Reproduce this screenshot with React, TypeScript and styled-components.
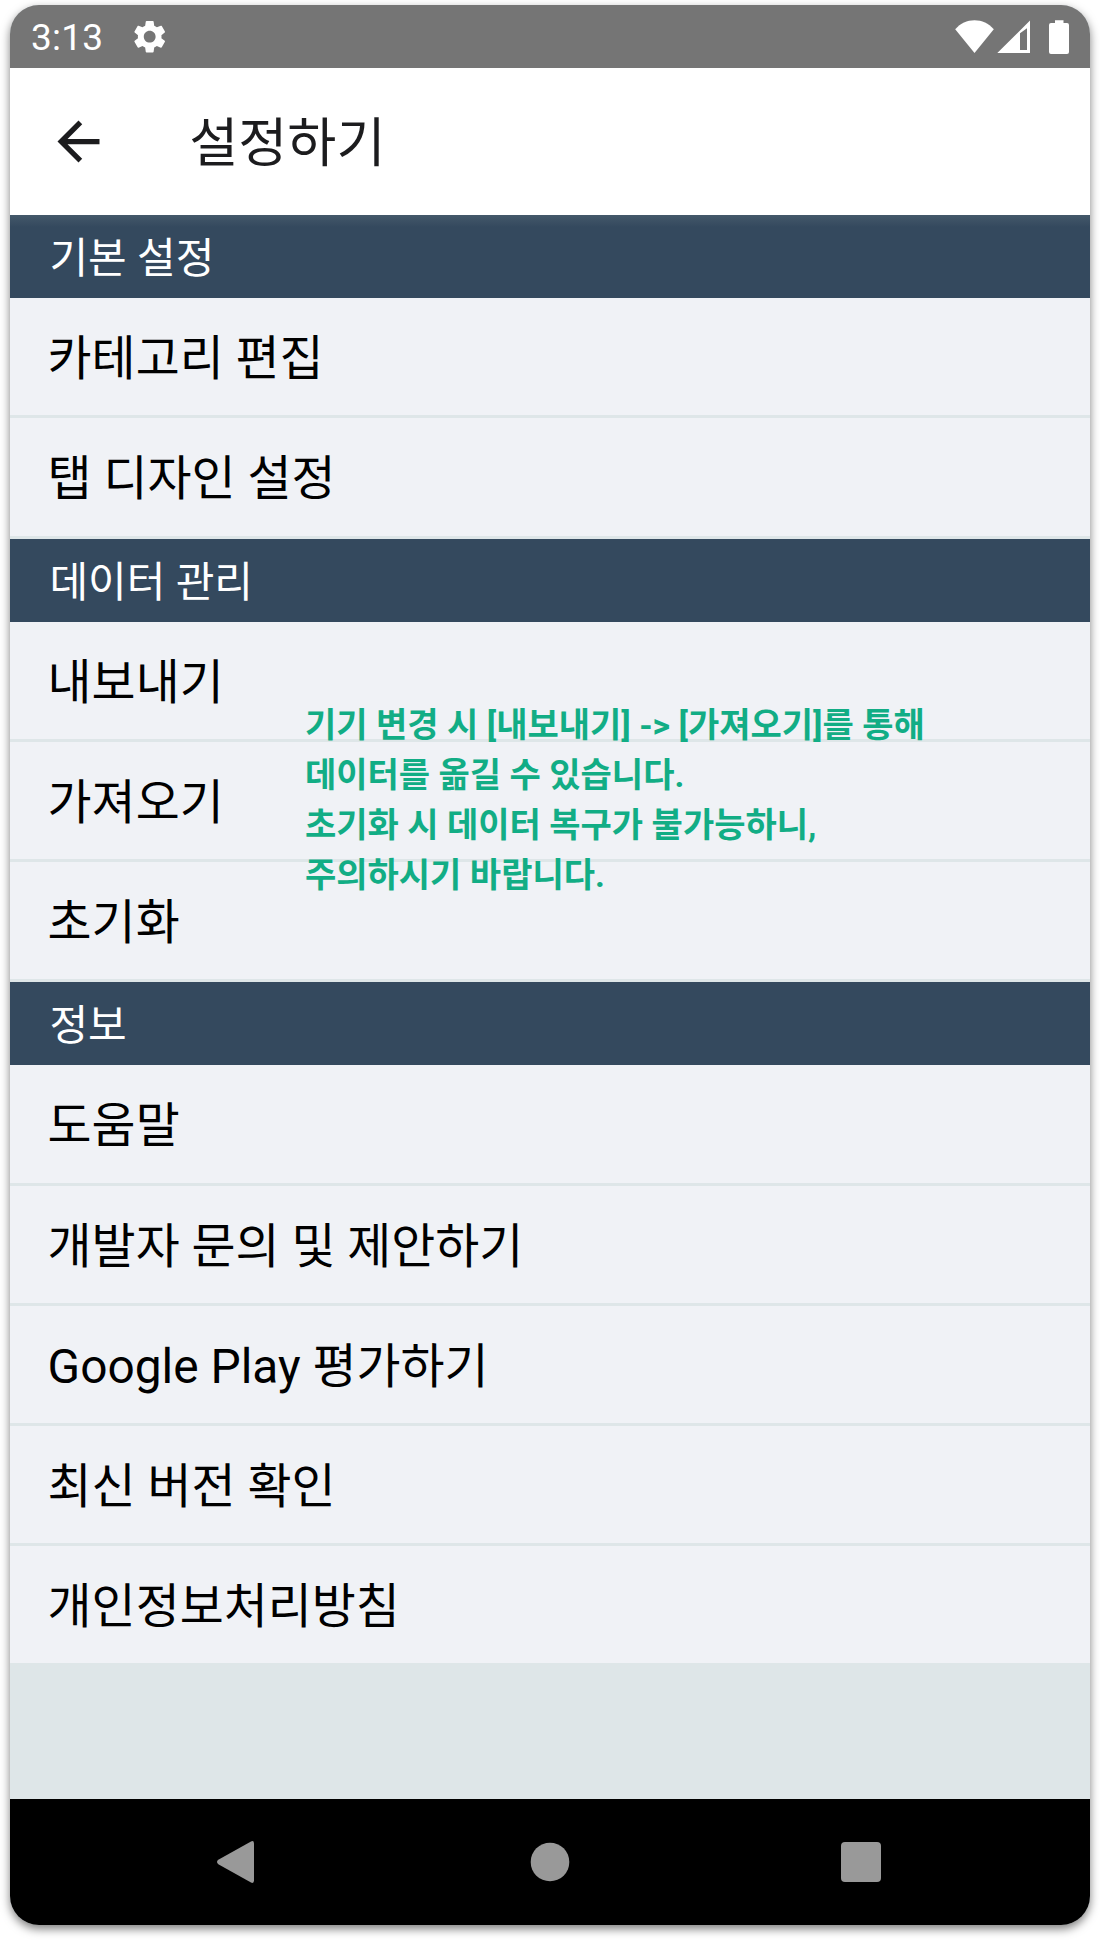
import React from "react";
import styled, { createGlobalStyle } from "styled-components";

const GlobalStyle = createGlobalStyle`
  *, *::before, *::after { box-sizing: border-box; }
  body { margin: 0; background: #fff; }
`;

const sans = `Roboto, "Noto Sans CJK KR", sans-serif`;

const Stage = styled.div`
  width: 1100px;
  height: 1940px;
  padding: 5px 10px 15px;
  overflow: hidden;
`;

const Phone = styled.main`
  display: flex;
  flex-direction: column;
  height: 1920px;
  border-radius: 29px;
  overflow: hidden;
  background: #dee6e8;
  box-shadow: 0 4px 10px rgba(0, 0, 0, 0.5);
  font-family: ${sans};
`;

const StatusBar = styled.div`
  display: flex;
  align-items: center;
  flex: none;
  height: 63px;
  padding: 0 21px 0 21px;
  background: #757575;
  color: #fff;
`;

const Clock = styled.time`
  width: 80px;
  padding-top: 3px;
  font-size: 37px;
  line-height: 60px;
  letter-spacing: 0.2px;
`;

const StatusIcon = styled.svg<{ $left?: number }>`
  display: block;
  flex: none;
  margin-left: ${(p) => p.$left ?? 0}px;
  fill: currentColor;
`;

const Spacer = styled.div`
  flex: 1;
`;

const AppBar = styled.header`
  display: flex;
  align-items: center;
  flex: none;
  height: 147px;
  padding-left: 37px;
  background: #fff;
  color: #1c1c1e;
`;

const BackButton = styled.button`
  display: block;
  width: 63px;
  height: 63px;
  margin: 0;
  padding: 0;
  border: 0;
  background: none;
  color: inherit;

  svg { display: block; fill: currentColor; }
`;

const Title = styled.h1`
  margin: 0 0 0 79.3px;
  padding-top: 4px;
  font-size: 53.3px;
  font-weight: 400;
  line-height: 80px;
`;

const Section = styled.section`
  position: relative;
  flex: none;
`;

const SectionHeader = styled.h2<{ $shaded?: boolean }>`
  margin: 0;
  height: 83px;
  padding: 2px 0 0 39.4px;
  background: ${(p) =>
    p.$shaded ? "linear-gradient(#44586a, #34495e 12px)" : "#34495e"};
  color: #fff;
  font-size: 42px;
  font-weight: 400;
  line-height: 83px;
`;

const Row = styled.div<{ $height?: number; $last?: boolean }>`
  height: ${(p) => (p.$height ?? 117) + (p.$last ? 0 : 3)}px;
  padding: 3px 0 0 37.6px;
  border-bottom: ${(p) => (p.$last ? 0 : 3)}px solid #dee6e8;
  background: #f0f2f6;
  color: #000;
  font-size: 47.85px;
  line-height: 117px;
`;

const Note = styled.p`
  position: absolute;
  top: 161px;
  left: 295px;
  margin: 0;
  color: #12ad85;
  font-size: 34px;
  font-weight: 700;
  line-height: 50px;
  white-space: pre;
`;

const NavBar = styled.nav`
  display: grid;
  grid-template-columns: repeat(3, 312px);
  justify-content: center;
  align-items: center;
  justify-items: center;
  flex: none;
  height: 126px;
  margin-top: auto;
  background: #000;

  svg { display: block; fill: #999; }
`;

type Item = { label: string; height?: number };
type Group = { title: string; items: Item[]; note?: string };

const groups: Group[] = [
  {
    title: "기본 설정",
    items: [{ label: "카테고리 편집" }, { label: "탭 디자인 설정", height: 118 }],
  },
  {
    title: "데이터 관리",
    items: [{ label: "내보내기" }, { label: "가져오기" }, { label: "초기화" }],
    note:
      "기기 변경 시 [내보내기] -> [가져오기]를 통해\n데이터를 옮길 수 있습니다.\n초기화 시 데이터 복구가 불가능하니,\n주의하시기 바랍니다.",
  },
  {
    title: "정보",
    items: [
      { label: "도움말", height: 118 },
      { label: "개발자 문의 및 제안하기" },
      { label: "Google Play 평가하기" },
      { label: "최신 버전 확인" },
      { label: "개인정보처리방침" },
    ],
  },
];

export default function App() {
  return (
    <Stage>
      <GlobalStyle />
      <Phone>
        <StatusBar>
          <Clock>3:13</Clock>
          <StatusIcon $left={19} width="39.4" height="39.4" viewBox="0 0 24 24">
            <path d="M19.14 12.94c.04-.3.06-.61.06-.94 0-.32-.02-.64-.07-.94l2.03-1.58c.18-.14.23-.41.12-.61l-1.92-3.32c-.12-.22-.37-.29-.59-.22l-2.39.96c-.5-.38-1.03-.7-1.62-.94l-.36-2.54c-.04-.24-.24-.41-.48-.41h-3.84c-.24 0-.43.17-.47.41l-.36 2.54c-.59.24-1.13.57-1.62.94l-2.39-.96c-.22-.08-.47 0-.59.22L2.74 8.87c-.12.21-.08.47.12.61l2.03 1.58c-.05.3-.09.63-.09.94s.02.64.07.94l-2.03 1.58c-.18.14-.23.41-.12.61l1.92 3.32c.12.22.37.29.59.22l2.39-.96c.5.38 1.03.7 1.62.94l.36 2.54c.05.24.24.41.48.41h3.84c.24 0 .44-.17.47-.41l.36-2.54c.59-.24 1.13-.56 1.62-.94l2.39.96c.22.08.47 0 .59-.22l1.92-3.32c.12-.22.07-.47-.12-.61l-2.01-1.58zM12 15.6c-1.98 0-3.6-1.62-3.6-3.6s1.62-3.6 3.6-3.6 3.6 1.62 3.6 3.6-1.62 3.6-3.6 3.6z" />
          </StatusIcon>
          <Spacer />
          <StatusIcon width="39" height="34" viewBox="0 0 39 34">
            <path d="M19.5 33 0.2 9.2C5.5 3.5 12 0.3 19.5 0.3S33.5 3.5 38.8 9.2Z" />
          </StatusIcon>
          <StatusIcon $left={3} width="33" height="34" viewBox="0 0 33 34">
            <path
              fillRule="evenodd"
              d="M0.3 33 33 0.5V33ZM23 13.3V30H30V8.2Z"
            />
          </StatusIcon>
          <StatusIcon $left={19} width="20" height="34" viewBox="0 0 20 34">
            <path d="M6 0.3h8.5V3H18a2 2 0 0 1 2 2v27a2 2 0 0 1-2 2H2a2 2 0 0 1-2-2V5a2 2 0 0 1 2-2h4Z" />
          </StatusIcon>
        </StatusBar>
        <AppBar>
          <BackButton aria-label="뒤로">
            <svg width="63" height="63" viewBox="0 0 24 24">
              <path d="M20 11H7.83l5.59-5.59L12 4l-8 8 8 8 1.41-1.41L7.83 13H20v-2z" />
            </svg>
          </BackButton>
          <Title>설정하기</Title>
        </AppBar>
        {groups.map((group, g) => (
          <Section key={group.title}>
            <SectionHeader $shaded={g === 0}>{group.title}</SectionHeader>
            {group.items.map((item, i) => (
              <Row
                key={item.label}
                $height={item.height}
                $last={g === groups.length - 1 && i === group.items.length - 1}
              >
                {item.label}
              </Row>
            ))}
            {group.note && <Note>{group.note}</Note>}
          </Section>
        ))}
        <NavBar>
          <svg width="60" height="60" viewBox="0 0 60 60">
            <path d="M10.3 27.8 43 9.4Q46 8.3 46 11.5V48.5Q46 51.7 43 50.6L10.3 32.2Q7.7 30 10.3 27.8Z" />
          </svg>
          <svg width="60" height="60" viewBox="0 0 60 60">
            <circle cx="30" cy="30" r="19.3" />
          </svg>
          <svg width="60" height="60" viewBox="0 0 60 60">
            <rect x="9" y="10" width="40" height="40" rx="4" />
          </svg>
        </NavBar>
      </Phone>
    </Stage>
  );
}
